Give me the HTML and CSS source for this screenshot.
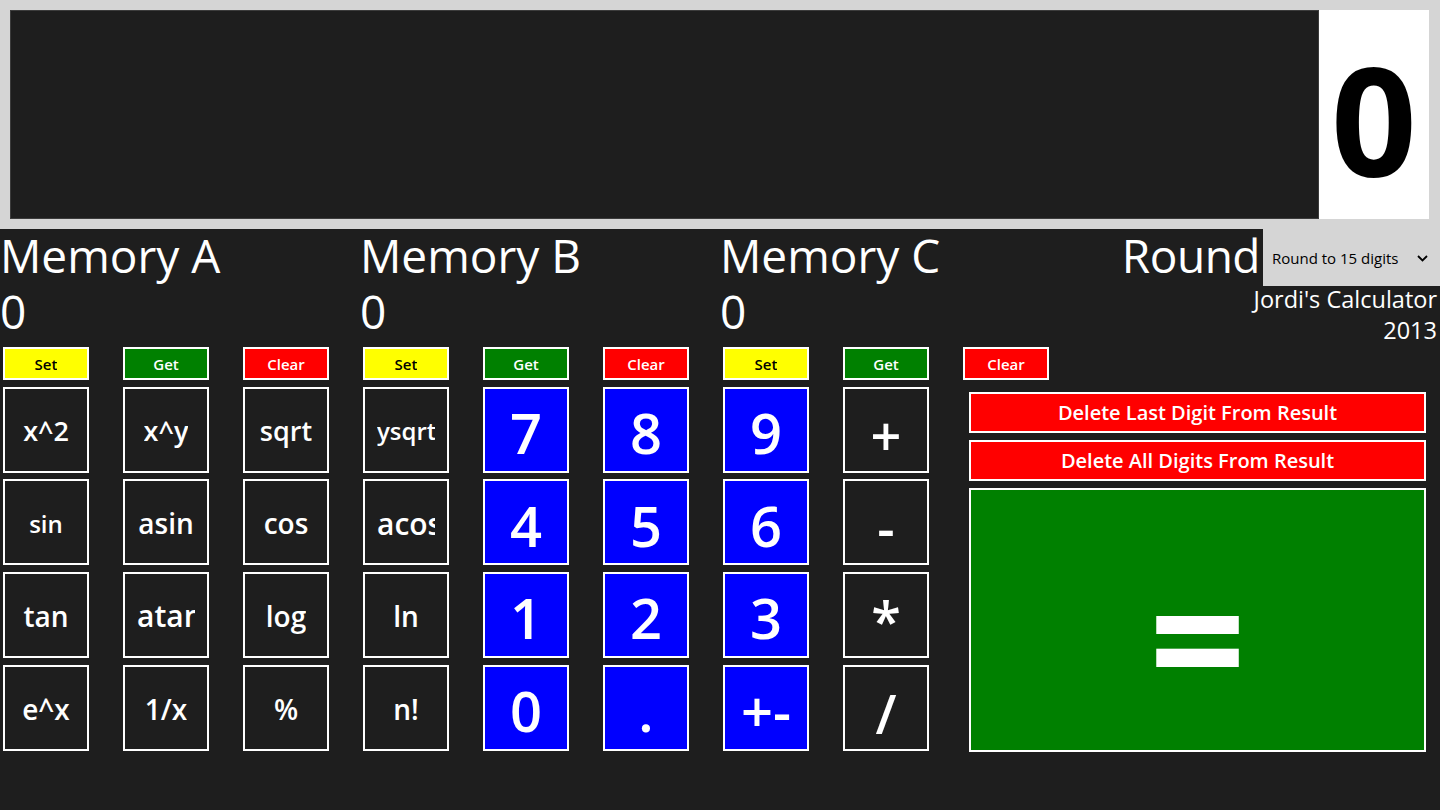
FILE: index.html
```html
<!DOCTYPE html>
<html lang="en">
<head>
<meta charset="utf-8">
<title>Jordi's Calculator</title>
<link rel="stylesheet" href="styles.css">
</head>
<body>
<div class="app">
  <header class="display">
    <div class="display-screen"></div>
    <div class="display-value">0</div>
  </header>

  <section class="info">
    <div class="mem">
      <div class="mem-title">Memory A</div>
      <div class="mem-value">0</div>
    </div>
    <div class="mem">
      <div class="mem-title">Memory B</div>
      <div class="mem-value">0</div>
    </div>
    <div class="mem">
      <div class="mem-title">Memory C</div>
      <div class="mem-value">0</div>
    </div>
    <div class="round">
      <div class="round-row">
        <span class="round-label">Round</span>
        <div class="select">
          <span>Round to 15 digits</span>
          <svg class="chevron" width="11" height="7" viewBox="0 0 11 7"><polyline points="1,1 5.5,5.5 10,1" fill="none" stroke="#000" stroke-width="1.8"/></svg>
        </div>
      </div>
      <div class="credit">Jordi's Calculator<br>2013</div>
    </div>
  </section>

  <section class="pad">
    <button class="btn mini set"><span>Set</span></button>
    <button class="btn mini get"><span>Get</span></button>
    <button class="btn mini clear"><span>Clear</span></button>
    <button class="btn mini set"><span>Set</span></button>
    <button class="btn mini get"><span>Get</span></button>
    <button class="btn mini clear"><span>Clear</span></button>
    <button class="btn mini set"><span>Set</span></button>
    <button class="btn mini get"><span>Get</span></button>
    <button class="btn mini clear"><span>Clear</span></button>

    <div class="side">
      <button class="btn wide"><span>Delete Last Digit From Result</span></button>
      <button class="btn wide"><span>Delete All Digits From Result</span></button>
      <button class="btn equals"><span>=</span></button>
    </div>

    <button class="btn fn sm"><span>x^2</span></button>
    <button class="btn fn sm"><span>x^y</span></button>
    <button class="btn fn sm"><span>sqrt</span></button>
    <button class="btn fn xs"><span>ysqrt</span></button>
    <button class="btn num"><span>7</span></button>
    <button class="btn num"><span>8</span></button>
    <button class="btn num"><span>9</span></button>
    <button class="btn op"><span>+</span></button>

    <button class="btn fn xs"><span>sin</span></button>
    <button class="btn fn"><span>asin</span></button>
    <button class="btn fn"><span>cos</span></button>
    <button class="btn fn lg"><span>acos</span></button>
    <button class="btn num"><span>4</span></button>
    <button class="btn num"><span>5</span></button>
    <button class="btn num"><span>6</span></button>
    <button class="btn op"><span>-</span></button>

    <button class="btn fn"><span>tan</span></button>
    <button class="btn fn lg"><span>atan</span></button>
    <button class="btn fn"><span>log</span></button>
    <button class="btn fn"><span>ln</span></button>
    <button class="btn num"><span>1</span></button>
    <button class="btn num"><span>2</span></button>
    <button class="btn num"><span>3</span></button>
    <button class="btn op"><span>*</span></button>

    <button class="btn fn"><span>e^x</span></button>
    <button class="btn fn"><span>1/x</span></button>
    <button class="btn fn"><span>%</span></button>
    <button class="btn fn"><span>n!</span></button>
    <button class="btn num"><span>0</span></button>
    <button class="btn num"><span>.</span></button>
    <button class="btn num"><span>+-</span></button>
    <button class="btn op"><span>/</span></button>
  </section>
</div>
</body>
</html>
```

FILE: styles.css
```css
* { box-sizing: border-box; }

html, body {
  margin: 0;
  padding: 0;
  width: 1440px;
  height: 810px;
  overflow: hidden;
  background: #1e1e1e;
  font-family: "Open Sans", "Noto Sans", sans-serif;
  color: #fff;
}

.app {
  width: 1440px;
  height: 810px;
  background: #1e1e1e;
}

/* ---- result display ---- */
.display {
  display: flex;
  height: 229px;
  padding: 10px 11px 10px 10px;
  background: #d5d5d5;
}

.display-screen {
  flex: 1;
  background: #1e1e1e;
  border: 1px solid #3c3c3c;
}

.display-value {
  width: 110px;
  background: #fff;
  color: #000;
  font-weight: 700;
  font-size: 150px;
  line-height: 200px;
  padding-top: 9px;
  text-align: center;
}

/* ---- memory / rounding row ---- */
.info {
  display: flex;
  height: 112px;
  margin-bottom: 6px;
}

.mem {
  width: 360px;
  font-size: 46px;
}

.mem-title { line-height: 52px; white-space: nowrap; }
.mem-value { line-height: 60px; }

.round {
  flex: 1;
  display: flex;
  flex-direction: column;
}

.round-row {
  display: flex;
  justify-content: flex-end;
  align-items: flex-start;
  gap: 3px;
}

.round-label {
  font-size: 46px;
  line-height: 52px;
  letter-spacing: -0.5px;
}

.select {
  width: 177px;
  height: 57px;
  background: #d5d5d5;
  color: #000;
  font-size: 15px;
  display: flex;
  align-items: center;
  justify-content: space-between;
  padding: 0 12px 0 9px;
}

.chevron { display: block; margin-top: 1px; }

.credit {
  text-align: right;
  font-size: 23.5px;
  line-height: 31px;
  padding-right: 3px;
  margin-top: -2px;
}

/* ---- keypad ---- */
.pad {
  display: grid;
  grid-template-columns: repeat(8, 120px) 1fr;
  grid-template-rows: 33px repeat(4, 86px);
  row-gap: 6.67px;
}

.btn {
  width: 86px;
  margin-left: 3px;
  justify-self: start;
  border: 2px solid #fff;
  background: #1e1e1e;
  color: #fff;
  font-family: inherit;
  font-weight: 600;
  display: flex;
  align-items: center;
  justify-content: center;
  padding: 0 12px;
  overflow: hidden;
  cursor: pointer;
}

.btn span {
  display: block;
  overflow: hidden;
  white-space: nowrap;
  min-width: 0;
}

.mini { font-size: 15px; padding: 0; }
.set { background: #ffff00; color: #000; }
.get { background: #008000; }
.clear { background: #ff0000; }

.fn { font-size: 28px; padding-top: 2px; }
.fn.sm { font-size: 27px; }
.fn.xs { font-size: 24px; }
.fn.lg { font-size: 30px; }

.num {
  background: #0000ff;
  font-size: 56px;
  padding-top: 5px;
}

.op { font-size: 54px; padding-top: 10px; }

.side {
  grid-column: 9;
  grid-row: 2 / 6;
  display: flex;
  flex-direction: column;
  gap: 7px;
  padding: 5px 14px 0 9px;
  margin-bottom: -1px;
}

.side .btn {
  width: auto;
  margin-left: 0;
}

.wide {
  height: 41px;
  background: #ff0000;
  font-size: 20px;
}

.equals {
  flex: 1;
  background: #008000;
  font-size: 170px;
  font-weight: 700;
  padding: 0;
  align-items: flex-end;
}

.btn.equals span {
  line-height: 227px;
  overflow: visible;
}
```
